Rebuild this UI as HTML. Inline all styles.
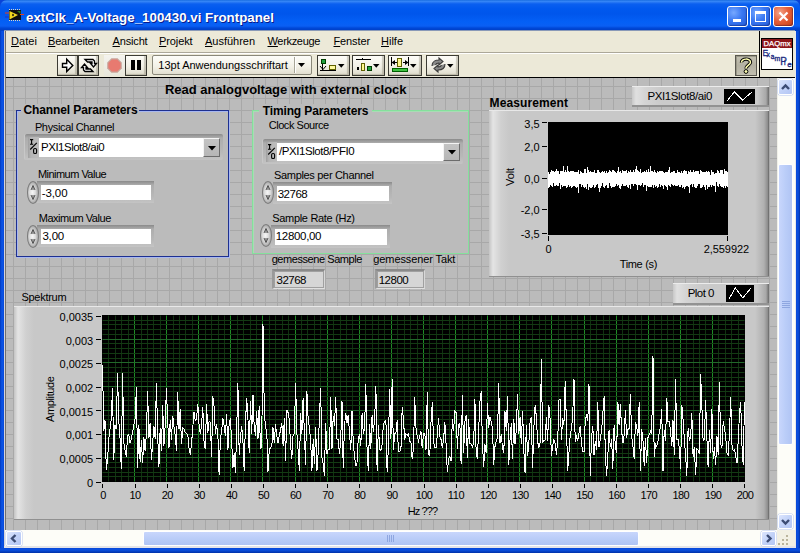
<!DOCTYPE html><html><head><meta charset="utf-8"><style>
*{margin:0;padding:0;box-sizing:border-box}
html,body{width:800px;height:553px;overflow:hidden;background:#fff;font-family:"Liberation Sans",sans-serif}
.a{position:absolute}
.t{position:absolute;white-space:pre;font-family:"Liberation Sans",sans-serif}
svg{position:absolute;overflow:visible}
</style></head><body>
<div class="a" style="left:0px;top:0px;width:800px;height:553px;background:#0842d8;"></div>
<div class="a" style="left:0px;top:0px;width:800px;height:31px;background:linear-gradient(180deg,#0a5fd8 0px,#3b8cf8 1px,#2c7cf4 2px,#0a5ff0 4px,#0058ee 9px,#0056ec 14px,#0460f6 22px,#0a5ff4 26px,#0048d8 28px,#0040c8 30px);border-radius:7px 7px 0 0;"></div>
<div class="a" style="left:0px;top:31px;width:4px;height:522px;background:linear-gradient(90deg,#0038c0,#0a55e8 2px,#0848d8);"></div>
<div class="a" style="left:4px;top:31px;width:1px;height:517px;background:#d4d4dc;"></div>
<div class="a" style="left:796px;top:31px;width:4px;height:522px;background:linear-gradient(90deg,#0848d8,#0a50e0 2px,#0030a8);"></div>
<div class="a" style="left:795px;top:31px;width:1px;height:517px;background:#e8e8e8;"></div>
<div class="a" style="left:0px;top:548px;width:800px;height:5px;background:linear-gradient(180deg,#0848d8,#0a50e0 2px,#0030a8);"></div>
<div class="a" style="left:4px;top:546px;width:792px;height:2px;background:#e4e4e8;"></div>
<svg style="left:8px;top:8px" width="16" height="16" viewBox="0 0 16 16">
<line x1="1" y1="1.5" x2="13" y2="1.5" stroke="#d8d8c8" stroke-dasharray="1 1"/>
<line x1="1" y1="12.5" x2="13" y2="12.5" stroke="#d8d8c8" stroke-dasharray="1 1"/>
<rect x="1" y="2" width="12" height="10" fill="#101010"/>
<path d="M1.5 3 L10 7 L1.5 11.5 Z" fill="#f2d820"/>
<path d="M9 3 L12.5 3 L12.5 6 Z" fill="#2a7a20"/>
<path d="M5 5.5 L6 7 L5 8.5 L4 7 Z" fill="#000"/>
<line x1="-3" y1="5" x2="1" y2="5" stroke="#e04020"/><line x1="12" y1="6.5" x2="16" y2="6.5" stroke="#e04020"/>
<line x1="-3" y1="9" x2="1" y2="9" stroke="#2030c0"/>
</svg>
<div class="a" style="left:727px;top:6px;width:21px;height:21px;border:1px solid #fff;border-radius:3px;background:radial-gradient(circle at 30% 30%,#76a8ff,#3a78f2 45%,#2a64e0 80%,#1c50c8);box-shadow:inset -1px -1px 1px rgba(0,0,60,.35);"></div>
<div class="a" style="left:750px;top:6px;width:21px;height:21px;border:1px solid #fff;border-radius:3px;background:radial-gradient(circle at 30% 30%,#76a8ff,#3a78f2 45%,#2a64e0 80%,#1c50c8);box-shadow:inset -1px -1px 1px rgba(0,0,60,.35);"></div>
<div class="a" style="left:773px;top:6px;width:21px;height:21px;border:1px solid #fff;border-radius:3px;background:radial-gradient(circle at 30% 30%,#f4a68a,#e5603c 45%,#d14a20 80%,#c03a18);box-shadow:inset -1px -1px 1px rgba(0,0,60,.35);"></div>
<div class="a" style="left:733px;top:19px;width:8px;height:3px;background:#fff;"></div>
<div class="a" style="left:755px;top:11px;width:11px;height:11px;border:1px solid #fff;border-top-width:3px;"></div>
<svg style="left:778px;top:11px" width="11" height="11"><path d="M1.5 1.5 L9.5 9.5 M9.5 1.5 L1.5 9.5" stroke="#fff" stroke-width="2.2"/></svg>
<div class="a" style="left:4px;top:30px;width:791px;height:1px;background:#8a9ab8;"></div>
<div class="a" style="left:4px;top:31px;width:791px;height:21px;background:#ece9d8;"></div>
<div class="a" style="left:4px;top:52px;width:756px;height:1px;background:#aca899;"></div>
<div class="a" style="left:4px;top:53px;width:756px;height:1px;background:#fff;"></div>
<div class="a" style="left:4px;top:54px;width:756px;height:23px;background:#ece9d8;"></div>
<div class="a" style="left:4px;top:77px;width:791px;height:1px;background:#000;"></div>
<div class="a" style="left:4px;top:31px;width:1px;height:47px;background:#c8c8d0;"></div>
<div class="a" style="left:5px;top:31px;width:1px;height:47px;background:#6e6e6e;"></div>
<div class="a" style="left:759px;top:31px;width:1px;height:46px;background:#000;"></div>
<div class="a" style="left:760px;top:31px;width:35px;height:46px;background:#ece9d8;"></div>
<div class="a" style="left:761px;top:38px;width:32px;height:32px;background:#fff;border:1px solid #000;"></div>
<div class="a" style="left:762px;top:39px;width:30px;height:9px;background:#8c1418;"></div>
<svg style="left:761px;top:38px" width="32" height="32"><text x="2.5" y="7.6" font-family="Liberation Sans" font-size="7.4" fill="#fff" stroke="#fff" stroke-width="0.25" textLength="27" lengthAdjust="spacingAndGlyphs">DAQmx</text>
<g fill="#1c2a80" stroke="#1c2a80" stroke-width="0.3" font-family="Liberation Sans">
<text x="1.5" y="17.6" font-size="8.5">E</text><text x="5.4" y="19.2" font-size="6.8">x</text><text x="9.8" y="20.8" font-size="6.5">a</text><text x="13.5" y="22.9" font-size="6.5" textLength="5.7" lengthAdjust="spacingAndGlyphs">m</text><text x="19.3" y="27.4" font-size="10">P</text><text x="23" y="26.5" font-size="7">l</text><text x="26.3" y="29" font-size="8">e</text></g></svg>
<div class="a" style="left:57px;top:55px;width:21px;height:21px;border:1px solid #3c3b34;background:linear-gradient(180deg,#fdfcf8,#f2f0e6 55%,#dedbcc);box-shadow:inset -2px -1px 1px rgba(120,115,95,.35);"></div>
<div class="a" style="left:78px;top:55px;width:21px;height:21px;border:1px solid #3c3b34;background:linear-gradient(180deg,#fdfcf8,#f2f0e6 55%,#dedbcc);box-shadow:inset -2px -1px 1px rgba(120,115,95,.35);"></div>
<div class="a" style="left:104px;top:55px;width:21px;height:21px;background:linear-gradient(180deg,#f4f3ee,#e8e6da);"></div>
<div class="a" style="left:125px;top:55px;width:22px;height:21px;border:1px solid #3c3b34;background:linear-gradient(180deg,#fdfcf8,#f2f0e6 55%,#dedbcc);box-shadow:inset -2px -1px 1px rgba(120,115,95,.35);"></div>
<svg style="left:57px;top:55px" width="21" height="21"><path d="M5.5 8.5 H9.7 V4.3 L15.8 10.4 L9.7 16.5 V12.3 H5.5 Z" fill="#fff" stroke="#000" stroke-width="1.4"/></svg>
<svg style="left:78px;top:55px" width="21" height="21"><path d="M7 4.5 L15 4.5 L16.5 6 L16.5 8.5 L18.5 8.5 L15.5 12 L12.5 8.5 L14 8.5 L14 7 L9.5 7 Z" fill="#fff" stroke="#000" stroke-width="1.3" stroke-linejoin="miter"/><path d="M15 16.5 L7 16.5 L5.5 15 L5.5 12.5 L3.5 12.5 L6.5 9 L9.5 12.5 L8 12.5 L8 14 L12.5 14 Z" fill="#fff" stroke="#000" stroke-width="1.3"/></svg>
<svg style="left:104px;top:55px" width="21" height="21"><path d="M7.4 3.2 H13.6 L17.8 7.4 V13.6 L13.6 17.8 H7.4 L3.2 13.6 V7.4 Z" fill="#c9a49a"/><path d="M7.9 4.4 H13.1 L16.6 7.9 V13.1 L13.1 16.6 H7.9 L4.4 13.1 V7.9 Z" fill="#e87a70"/></svg>
<div class="a" style="left:131px;top:60px;width:4px;height:10px;background:#000;"></div>
<div class="a" style="left:137px;top:60px;width:4px;height:10px;background:#000;"></div>
<div class="a" style="left:152px;top:55px;width:160px;height:20px;border:1px solid #8a887a;border-radius:2px;background:linear-gradient(180deg,#fdfdf9,#f2f0e6 60%,#e2dfd0);"></div>
<div class="a" style="left:294px;top:57px;width:1px;height:16px;background:#a8a698;"></div>
<div class="a" style="left:295px;top:57px;width:1px;height:16px;background:#fff;"></div>
<svg style="left:298px;top:63px" width="8" height="5"><path d="M0 0 H7 L3.5 4 Z" fill="#000"/></svg>
<div class="a" style="left:317px;top:55px;width:33px;height:21px;border:1px solid #3c3b34;background:linear-gradient(180deg,#fdfcf8,#f2f0e6 55%,#dedbcc);box-shadow:inset -2px -1px 1px rgba(120,115,95,.35);"></div>
<svg style="left:338px;top:64px" width="8" height="5"><path d="M0 0 H6.5 L3.25 3.8 Z" fill="#000"/></svg>
<div class="a" style="left:352px;top:55px;width:33px;height:21px;border:1px solid #3c3b34;background:linear-gradient(180deg,#fdfcf8,#f2f0e6 55%,#dedbcc);box-shadow:inset -2px -1px 1px rgba(120,115,95,.35);"></div>
<svg style="left:373px;top:64px" width="8" height="5"><path d="M0 0 H6.5 L3.25 3.8 Z" fill="#000"/></svg>
<div class="a" style="left:388px;top:55px;width:34px;height:21px;border:1px solid #3c3b34;background:linear-gradient(180deg,#fdfcf8,#f2f0e6 55%,#dedbcc);box-shadow:inset -2px -1px 1px rgba(120,115,95,.35);"></div>
<svg style="left:410px;top:64px" width="8" height="5"><path d="M0 0 H6.5 L3.25 3.8 Z" fill="#000"/></svg>
<div class="a" style="left:426px;top:55px;width:33px;height:21px;border:1px solid #3c3b34;background:linear-gradient(180deg,#fdfcf8,#f2f0e6 55%,#dedbcc);box-shadow:inset -2px -1px 1px rgba(120,115,95,.35);"></div>
<svg style="left:447px;top:64px" width="8" height="5"><path d="M0 0 H6.5 L3.25 3.8 Z" fill="#000"/></svg>
<div class="a" style="left:321px;top:59px;width:5px;height:5px;background:#20a040;border:1px solid #004000;"></div>
<div class="a" style="left:322px;top:64px;width:1px;height:6px;background:#000;"></div>
<svg style="left:319px;top:65px" width="10" height="6"><path d="M1 1 L4 4.5 L7 1" fill="none" stroke="#000"/></svg>
<div class="a" style="left:320px;top:70px;width:16px;height:1px;background:#000;"></div>
<div class="a" style="left:329px;top:65px;width:7px;height:5px;background:#fffaa0;border:1px solid #606000;"></div>
<div class="a" style="left:356px;top:59px;width:15px;height:1px;background:#000;"></div>
<div class="a" style="left:362px;top:58px;width:1px;height:2px;background:#000;"></div>
<div class="a" style="left:357px;top:67px;width:2px;height:3px;background:#000;"></div>
<div class="a" style="left:361px;top:63px;width:4px;height:8px;background:#fff890;border:1px solid #606000;"></div>
<div class="a" style="left:367px;top:66px;width:5px;height:5px;background:#20a040;border:1px solid #004000;"></div>
<div class="a" style="left:397px;top:58px;width:5px;height:9px;background:#fff890;border:1px solid #606000;"></div>
<svg style="left:391px;top:59px" width="18" height="8"><path d="M0.5 3.5 L4 1 V6Z M17.5 3.5 L14 1 V6Z" fill="#000"/><path d="M3 3.5 H6 M12 3.5 H15" stroke="#000"/></svg>
<div class="a" style="left:391px;top:57px;width:1px;height:9px;background:#000;"></div>
<div class="a" style="left:408px;top:57px;width:1px;height:9px;background:#000;"></div>
<div class="a" style="left:392px;top:68px;width:16px;height:4px;background:#40c040;border:1px solid #006000;"></div>
<svg style="left:429px;top:57px" width="20" height="16"><path d="M3 9 C3 4 7 3 10 3 L10 1 L14 4.5 L10 8 L10 6 C8 6 7 6.5 6.5 8" fill="#8a8a8a" stroke="#3a3a3a" stroke-width="1.1"/><path d="M16 7 C16 12 12 13 9 13 L9 15 L5 11.5 L9 8 L9 10 C11 10 12 9.5 12.5 8" fill="#8a8a8a" stroke="#3a3a3a" stroke-width="1.1"/></svg>
<div class="a" style="left:735px;top:55px;width:22px;height:21px;border:1px solid #5a5850;background:linear-gradient(180deg,#c4c1b2,#b4b1a2 50%,#c2bfb0);box-shadow:inset 1px 1px 0 #9a9888;"></div>
<svg style="left:735px;top:55px" width="22" height="21"><path d="M6.5 7.5 C6 3.3 15.5 2.8 15.5 7.2 C15.5 9.8 11 10.5 11 13.5" fill="none" stroke="#000" stroke-width="3.4"/><path d="M6.5 7.5 C6 3.3 15.5 2.8 15.5 7.2 C15.5 9.8 11 10.5 11 13.5" fill="none" stroke="#ffffb0" stroke-width="1.5"/><circle cx="11" cy="16.5" r="1.9" fill="#ffffb0" stroke="#000" stroke-width="1"/></svg>
<div class="a" style="left:4px;top:78px;width:1px;height:452px;background:#d4d4dc;"></div>
<div class="a" style="left:5px;top:78px;width:1px;height:452px;background:#707070;"></div>
<div class="a" style="left:6px;top:78px;width:771px;height:452px;background-color:#bbbbbb;background-image:linear-gradient(90deg,#a8a8a8 1px,transparent 1px),linear-gradient(180deg,#a8a8a8 1px,transparent 1px);background-size:12px 12px;background-position:7px 8px;"></div>
<div class="a" style="left:17px;top:111px;width:213px;height:147px;border:1px solid #a8b8f0;"></div>
<div class="a" style="left:16px;top:110px;width:213px;height:147px;border:1px solid #1e3090;background:#bbbbbb;box-shadow:inset 1px 1px 0 #a8b8f0;"></div>
<div class="a" style="left:21px;top:104px;width:118px;height:10px;background:#bbbbbb;"></div>
<div class="a" style="left:252px;top:110px;width:217px;height:144px;border:1px solid #84e09c;background:#bbbbbb;box-shadow:inset 1px 1px 0 #a8dcb4;"></div>
<div class="a" style="left:259px;top:104px;width:113px;height:10px;background:#bbbbbb;"></div>
<div class="a" style="left:25px;top:134px;width:198px;height:26px;background:linear-gradient(180deg,#8a8a8a 0,#9c9c9c 2px,#adadad 4px,#b8b8b8 70%,#c4c4c4 100%);border-radius:2px;box-shadow:-1px 0 0 #c8c8c8;"></div>
<div class="a" style="left:28px;top:137px;width:11px;height:21px;background:linear-gradient(90deg,#a0a0a0,#b6b6b6 3px,#bcbcbc);"></div>
<div class="a" style="left:39px;top:138px;width:164px;height:19px;background:#fff;"></div>
<svg style="left:30px;top:139px" width="9" height="16"><g fill="none" stroke="#000" stroke-width="1.1">
<path d="M0 0.6 H3.2 M1.6 0.6 V5.2 M0 5.2 H3.2"/><path d="M0.2 10.5 L6.8 3.8"/><rect x="3.6" y="9.5" width="3" height="5" rx="1.3"/></g></svg>
<div class="a" style="left:203px;top:138px;width:17px;height:19px;background:linear-gradient(180deg,#c4c4c4,#b6b6b6);border:1px solid #f4f4f4;border-right-color:#6c6c6c;border-bottom-color:#6c6c6c;"></div>
<svg style="left:208px;top:145.5px" width="8" height="5"><path d="M0 0 H8 L4 4.5 Z" fill="#000"/></svg>
<div class="a" style="left:37px;top:181px;width:117px;height:22px;background:linear-gradient(180deg,#8a8a8a 0,#9c9c9c 2px,#adadad 4px,#b8b8b8 70%,#c4c4c4 100%);"></div>
<div class="a" style="left:41px;top:185px;width:110px;height:15px;background:#fff;"></div>
<div class="a" style="left:27px;top:181px;width:12px;height:23px;background:radial-gradient(ellipse 65% 60% at 45% 50%,#f6f6f6,#dcdcdc 45%,#b0b0b0 80%,#8a8a8a);border:1px solid #7c7c7c;border-radius:6px/11px;"></div>
<svg style="left:27px;top:181px" width="12" height="23"><path d="M4 9 L6 4.5 L8 9 M6 5 V9 M4 14 L6 18.5 L8 14 M6 14 V18" fill="none" stroke="#505050" stroke-width="1"/></svg>
<div class="a" style="left:37px;top:225px;width:117px;height:22px;background:linear-gradient(180deg,#8a8a8a 0,#9c9c9c 2px,#adadad 4px,#b8b8b8 70%,#c4c4c4 100%);"></div>
<div class="a" style="left:41px;top:229px;width:110px;height:15px;background:#fff;"></div>
<div class="a" style="left:27px;top:224.5px;width:12px;height:23px;background:radial-gradient(ellipse 65% 60% at 45% 50%,#f6f6f6,#dcdcdc 45%,#b0b0b0 80%,#8a8a8a);border:1px solid #7c7c7c;border-radius:6px/11px;"></div>
<svg style="left:27px;top:224.5px" width="12" height="23"><path d="M4 9 L6 4.5 L8 9 M6 5 V9 M4 14 L6 18.5 L8 14 M6 14 V18" fill="none" stroke="#505050" stroke-width="1"/></svg>
<div class="a" style="left:262.5px;top:138.7px;width:200.5px;height:25.200000000000017px;background:linear-gradient(180deg,#8a8a8a 0,#9c9c9c 2px,#adadad 4px,#b8b8b8 70%,#c4c4c4 100%);border-radius:2px;box-shadow:-1px 0 0 #c8c8c8;"></div>
<div class="a" style="left:265.5px;top:141.7px;width:11px;height:20.200000000000017px;background:linear-gradient(90deg,#a0a0a0,#b6b6b6 3px,#bcbcbc);"></div>
<div class="a" style="left:276.5px;top:142.7px;width:166.5px;height:18.200000000000017px;background:#fff;"></div>
<svg style="left:267.5px;top:143.7px" width="9" height="16"><g fill="none" stroke="#000" stroke-width="1.1">
<path d="M0 0.6 H3.2 M1.6 0.6 V5.2 M0 5.2 H3.2"/><path d="M0.2 10.5 L6.8 3.8"/><rect x="3.6" y="9.5" width="3" height="5" rx="1.3"/></g></svg>
<div class="a" style="left:443px;top:142.7px;width:17px;height:18.200000000000017px;background:linear-gradient(180deg,#c4c4c4,#b6b6b6);border:1px solid #f4f4f4;border-right-color:#6c6c6c;border-bottom-color:#6c6c6c;"></div>
<svg style="left:448px;top:149.8px" width="8" height="5"><path d="M0 0 H8 L4 4.5 Z" fill="#000"/></svg>
<div class="a" style="left:273px;top:182px;width:119px;height:22px;background:linear-gradient(180deg,#8a8a8a 0,#9c9c9c 2px,#adadad 4px,#b8b8b8 70%,#c4c4c4 100%);"></div>
<div class="a" style="left:277px;top:186px;width:112px;height:15px;background:#fff;"></div>
<div class="a" style="left:262px;top:181px;width:12px;height:23px;background:radial-gradient(ellipse 65% 60% at 45% 50%,#f6f6f6,#dcdcdc 45%,#b0b0b0 80%,#8a8a8a);border:1px solid #7c7c7c;border-radius:6px/11px;"></div>
<svg style="left:262px;top:181px" width="12" height="23"><path d="M4 9 L6 4.5 L8 9 M6 5 V9 M4 14 L6 18.5 L8 14 M6 14 V18" fill="none" stroke="#505050" stroke-width="1"/></svg>
<div class="a" style="left:271px;top:224.5px;width:119px;height:23.5px;background:linear-gradient(180deg,#8a8a8a 0,#9c9c9c 2px,#adadad 4px,#b8b8b8 70%,#c4c4c4 100%);"></div>
<div class="a" style="left:275px;top:228.5px;width:112px;height:16.5px;background:#fff;"></div>
<div class="a" style="left:260px;top:224px;width:12px;height:23px;background:radial-gradient(ellipse 65% 60% at 45% 50%,#f6f6f6,#dcdcdc 45%,#b0b0b0 80%,#8a8a8a);border:1px solid #7c7c7c;border-radius:6px/11px;"></div>
<svg style="left:260px;top:224px" width="12" height="23"><path d="M4 9 L6 4.5 L8 9 M6 5 V9 M4 14 L6 18.5 L8 14 M6 14 V18" fill="none" stroke="#505050" stroke-width="1"/></svg>
<div class="a" style="left:272px;top:269px;width:53px;height:20px;background:#a0a0a0;border-top:2px solid #8a8a8a;border-left:2px solid #9a9a9a;border-bottom:1px solid #e0e0e0;border-right:1px solid #d8d8d8;"></div>
<div class="a" style="left:275px;top:272px;width:48px;height:15px;background:#d6d6d6;"></div>
<div class="a" style="left:375px;top:269px;width:50px;height:20px;background:#a0a0a0;border-top:2px solid #8a8a8a;border-left:2px solid #9a9a9a;border-bottom:1px solid #e0e0e0;border-right:1px solid #d8d8d8;"></div>
<div class="a" style="left:378px;top:272px;width:45px;height:15px;background:#d6d6d6;"></div>
<div class="a" style="left:489px;top:110px;width:280px;height:167px;background:linear-gradient(90deg,#c4c4c4 0,#e4e4e4 4px,#d0d0d0 12px,#c8c8c8 20px,#c8c8c8 calc(100% - 14px),#b0b0b0 calc(100% - 5px),#8a8a8a calc(100% - 1px),#5a5a5a 100%);border-top:1px solid #e8e8e8;border-bottom:1px solid #909090;"></div>
<div class="a" style="left:548px;top:122px;width:180px;height:113px;background:#000;"></div>
<div class="a" style="left:542px;top:122px;width:5px;height:1px;background:#000;"></div>
<div class="a" style="left:542px;top:146px;width:5px;height:1px;background:#000;"></div>
<div class="a" style="left:542px;top:178px;width:5px;height:1px;background:#000;"></div>
<div class="a" style="left:542px;top:209px;width:5px;height:1px;background:#000;"></div>
<div class="a" style="left:542px;top:233px;width:5px;height:1px;background:#000;"></div>
<div class="a" style="left:548px;top:236px;width:1px;height:5px;background:#000;"></div>
<div class="a" style="left:727px;top:236px;width:1px;height:5px;background:#000;"></div>
<div class="a" style="left:632px;top:86px;width:137px;height:21px;background:linear-gradient(90deg,#c8c8c8,#e0e0e0 4px,#d4d4d4 13px,#cacaca 30px,#cacaca calc(100% - 12px),#a8a8a8 calc(100% - 3px),#6a6a6a);border-top:1px solid #ececec;border-bottom:2px solid #929292;"></div>
<div class="a" style="left:724px;top:89px;width:31px;height:15px;background:#000;"></div>
<svg style="left:724px;top:89px" width="31" height="15"><path d="M3 12 L10.3 3 L18.6 11 L28 3" fill="none" stroke="#fff" stroke-width="1" shape-rendering="crispEdges"/></svg>
<div class="a" style="left:673px;top:283px;width:96px;height:22px;background:linear-gradient(90deg,#c8c8c8,#e0e0e0 4px,#d4d4d4 13px,#cacaca 30px,#cacaca calc(100% - 12px),#a8a8a8 calc(100% - 3px),#6a6a6a);border-top:1px solid #ececec;border-bottom:2px solid #929292;"></div>
<div class="a" style="left:726px;top:285px;width:28px;height:17px;background:#000;"></div>
<svg style="left:726px;top:285px" width="28" height="17"><path d="M3 14 L9.3 3 L16.8 13 L25 3" fill="none" stroke="#fff" stroke-width="1" shape-rendering="crispEdges"/></svg>
<svg style="left:0;top:0" width="800" height="553"><polygon points="548,172 549,172 549,174 550,174 550,172 551,172 551,170 552,170 552,171 553,171 553,171 554,171 554,172 555,172 555,171 556,171 556,169 557,169 557,171 558,171 558,171 559,171 559,174 560,174 560,171 561,171 561,171 562,171 562,171 563,171 563,166 564,166 564,172 565,172 565,170 566,170 566,172 567,172 567,166 568,166 568,171 569,171 569,172 570,172 570,171 571,171 571,171 572,171 572,171 573,171 573,171 574,171 574,172 575,172 575,172 576,172 576,172 577,172 577,172 578,172 578,170 579,170 579,174 580,174 580,171 581,171 581,172 582,172 582,173 583,173 583,173 584,173 584,169 585,169 585,169 586,169 586,173 587,173 587,167 588,167 588,170 589,170 589,172 590,172 590,171 591,171 591,172 592,172 592,172 593,172 593,172 594,172 594,170 595,170 595,173 596,173 596,173 597,173 597,170 598,170 598,170 599,170 599,172 600,172 600,173 601,173 601,172 602,172 602,171 603,171 603,172 604,172 604,171 605,171 605,173 606,173 606,171 607,171 607,173 608,173 608,172 609,172 609,170 610,170 610,171 611,171 611,172 612,172 612,170 613,170 613,170 614,170 614,171 615,171 615,172 616,172 616,173 617,173 617,171 618,171 618,167 619,167 619,172 620,172 620,171 621,171 621,173 622,173 622,170 623,170 623,171 624,171 624,171 625,171 625,171 626,171 626,170 627,170 627,173 628,173 628,171 629,171 629,172 630,172 630,170 631,170 631,172 632,172 632,172 633,172 633,170 634,170 634,172 635,172 635,169 636,169 636,166 637,166 637,170 638,170 638,171 639,171 639,172 640,172 640,169 641,169 641,173 642,173 642,172 643,172 643,172 644,172 644,171 645,171 645,172 646,172 646,170 647,170 647,172 648,172 648,169 649,169 649,172 650,172 650,166 651,166 651,171 652,171 652,171 653,171 653,172 654,172 654,170 655,170 655,172 656,172 656,173 657,173 657,171 658,171 658,172 659,172 659,171 660,171 660,171 661,171 661,171 662,171 662,171 663,171 663,172 664,172 664,173 665,173 665,172 666,172 666,172 667,172 667,172 668,172 668,170 669,170 669,167 670,167 670,173 671,173 671,172 672,172 672,172 673,172 673,171 674,171 674,171 675,171 675,173 676,173 676,173 677,173 677,170 678,170 678,172 679,172 679,172 680,172 680,173 681,173 681,171 682,171 682,173 683,173 683,171 684,171 684,170 685,170 685,171 686,171 686,171 687,171 687,174 688,174 688,171 689,171 689,172 690,172 690,170 691,170 691,172 692,172 692,172 693,172 693,170 694,170 694,172 695,172 695,171 696,171 696,171 697,171 697,171 698,171 698,171 699,171 699,174 700,174 700,170 701,170 701,171 702,171 702,172 703,172 703,172 704,172 704,172 705,172 705,172 706,172 706,171 707,171 707,172 708,172 708,171 709,171 709,172 710,172 710,175 711,175 711,170 712,170 712,172 713,172 713,172 714,172 714,174 715,174 715,173 716,173 716,173 717,173 717,170 718,170 718,171 719,171 719,173 720,173 720,170 721,170 721,170 722,170 722,170 723,170 723,174 724,174 724,169 725,169 725,171 726,171 726,171 727,171 727,172 728,172 728,187 727,187 727,186 726,186 726,188 725,188 725,186 724,186 724,188 723,188 723,187 722,187 722,187 721,187 721,186 720,186 720,184 719,184 719,187 718,187 718,186 717,186 717,182 716,182 716,192 715,192 715,186 714,186 714,186 713,186 713,185 712,185 712,187 711,187 711,185 710,185 710,187 709,187 709,187 708,187 708,189 707,189 707,185 706,185 706,190 705,190 705,187 704,187 704,185 703,185 703,187 702,187 702,188 701,188 701,188 700,188 700,184 699,184 699,184 698,184 698,186 697,186 697,188 696,188 696,188 695,188 695,187 694,187 694,184 693,184 693,187 692,187 692,184 691,184 691,185 690,185 690,193 689,193 689,187 688,187 688,186 687,186 687,186 686,186 686,187 685,187 685,189 684,189 684,187 683,187 683,188 682,188 682,185 681,185 681,187 680,187 680,187 679,187 679,185 678,185 678,186 677,186 677,186 676,186 676,186 675,186 675,185 674,185 674,186 673,186 673,185 672,185 672,184 671,184 671,187 670,187 670,186 669,186 669,185 668,185 668,190 667,190 667,187 666,187 666,186 665,186 665,185 664,185 664,189 663,189 663,186 662,186 662,185 661,185 661,187 660,187 660,184 659,184 659,187 658,187 658,188 657,188 657,186 656,186 656,187 655,187 655,185 654,185 654,188 653,188 653,185 652,185 652,187 651,187 651,187 650,187 650,187 649,187 649,187 648,187 648,186 647,186 647,191 646,191 646,185 645,185 645,185 644,185 644,187 643,187 643,183 642,183 642,185 641,185 641,186 640,186 640,185 639,185 639,185 638,185 638,190 637,190 637,185 636,185 636,184 635,184 635,184 634,184 634,186 633,186 633,184 632,184 632,184 631,184 631,189 630,189 630,185 629,185 629,188 628,188 628,187 627,187 627,185 626,185 626,186 625,186 625,186 624,186 624,186 623,186 623,184 622,184 622,186 621,186 621,189 620,189 620,188 619,188 619,185 618,185 618,186 617,186 617,184 616,184 616,186 615,186 615,187 614,187 614,187 613,187 613,187 612,187 612,188 611,188 611,186 610,186 610,183 609,183 609,188 608,188 608,188 607,188 607,185 606,185 606,186 605,186 605,188 604,188 604,187 603,187 603,183 602,183 602,186 601,186 601,188 600,188 600,192 599,192 599,188 598,188 598,184 597,184 597,185 596,185 596,187 595,187 595,188 594,188 594,185 593,185 593,187 592,187 592,188 591,188 591,188 590,188 590,187 589,187 589,190 588,190 588,184 587,184 587,189 586,189 586,187 585,187 585,188 584,188 584,187 583,187 583,185 582,185 582,187 581,187 581,184 580,184 580,184 579,184 579,193 578,193 578,187 577,187 577,188 576,188 576,187 575,187 575,186 574,186 574,186 573,186 573,187 572,187 572,188 571,188 571,186 570,186 570,187 569,187 569,185 568,185 568,187 567,187 567,188 566,188 566,186 565,186 565,186 564,186 564,186 563,186 563,187 562,187 562,185 561,185 561,189 560,189 560,183 559,183 559,186 558,186 558,186 557,186 557,185 556,185 556,186 555,186 555,186 554,186 554,183 553,183 553,187 552,187 552,186 551,186 551,185 550,185 550,187 549,187 549,188 548,188" fill="#fff" shape-rendering="crispEdges"/></svg>
<div class="a" style="left:14px;top:306px;width:755px;height:214px;background:linear-gradient(90deg,#c4c4c4 0,#e4e4e4 4px,#d0d0d0 12px,#c8c8c8 20px,#c8c8c8 calc(100% - 14px),#b0b0b0 calc(100% - 5px),#8a8a8a calc(100% - 1px),#5a5a5a 100%);border-top:1px solid #e8e8e8;border-bottom:1px solid #909090;"></div>
<div class="a" style="left:102px;top:315px;width:643px;height:167px;background:#000;"></div>
<svg style="left:0;top:0" width="800" height="553"><line x1="108.5" y1="315.5" x2="108.5" y2="481.5" stroke="#113211" stroke-width="1"/><line x1="115.5" y1="315.5" x2="115.5" y2="481.5" stroke="#113211" stroke-width="1"/><line x1="121.5" y1="315.5" x2="121.5" y2="481.5" stroke="#113211" stroke-width="1"/><line x1="128.5" y1="315.5" x2="128.5" y2="481.5" stroke="#113211" stroke-width="1"/><line x1="134.5" y1="315.5" x2="134.5" y2="481.5" stroke="#1f8a26" stroke-width="1"/><line x1="141.5" y1="315.5" x2="141.5" y2="481.5" stroke="#113211" stroke-width="1"/><line x1="147.5" y1="315.5" x2="147.5" y2="481.5" stroke="#113211" stroke-width="1"/><line x1="153.5" y1="315.5" x2="153.5" y2="481.5" stroke="#113211" stroke-width="1"/><line x1="160.5" y1="315.5" x2="160.5" y2="481.5" stroke="#113211" stroke-width="1"/><line x1="166.5" y1="315.5" x2="166.5" y2="481.5" stroke="#1f8a26" stroke-width="1"/><line x1="173.5" y1="315.5" x2="173.5" y2="481.5" stroke="#113211" stroke-width="1"/><line x1="179.5" y1="315.5" x2="179.5" y2="481.5" stroke="#113211" stroke-width="1"/><line x1="185.5" y1="315.5" x2="185.5" y2="481.5" stroke="#113211" stroke-width="1"/><line x1="192.5" y1="315.5" x2="192.5" y2="481.5" stroke="#113211" stroke-width="1"/><line x1="198.5" y1="315.5" x2="198.5" y2="481.5" stroke="#1f8a26" stroke-width="1"/><line x1="205.5" y1="315.5" x2="205.5" y2="481.5" stroke="#113211" stroke-width="1"/><line x1="211.5" y1="315.5" x2="211.5" y2="481.5" stroke="#113211" stroke-width="1"/><line x1="218.5" y1="315.5" x2="218.5" y2="481.5" stroke="#113211" stroke-width="1"/><line x1="224.5" y1="315.5" x2="224.5" y2="481.5" stroke="#113211" stroke-width="1"/><line x1="230.5" y1="315.5" x2="230.5" y2="481.5" stroke="#1f8a26" stroke-width="1"/><line x1="237.5" y1="315.5" x2="237.5" y2="481.5" stroke="#113211" stroke-width="1"/><line x1="243.5" y1="315.5" x2="243.5" y2="481.5" stroke="#113211" stroke-width="1"/><line x1="250.5" y1="315.5" x2="250.5" y2="481.5" stroke="#113211" stroke-width="1"/><line x1="256.5" y1="315.5" x2="256.5" y2="481.5" stroke="#113211" stroke-width="1"/><line x1="262.5" y1="315.5" x2="262.5" y2="481.5" stroke="#1f8a26" stroke-width="1"/><line x1="269.5" y1="315.5" x2="269.5" y2="481.5" stroke="#113211" stroke-width="1"/><line x1="275.5" y1="315.5" x2="275.5" y2="481.5" stroke="#113211" stroke-width="1"/><line x1="282.5" y1="315.5" x2="282.5" y2="481.5" stroke="#113211" stroke-width="1"/><line x1="288.5" y1="315.5" x2="288.5" y2="481.5" stroke="#113211" stroke-width="1"/><line x1="295.5" y1="315.5" x2="295.5" y2="481.5" stroke="#1f8a26" stroke-width="1"/><line x1="301.5" y1="315.5" x2="301.5" y2="481.5" stroke="#113211" stroke-width="1"/><line x1="307.5" y1="315.5" x2="307.5" y2="481.5" stroke="#113211" stroke-width="1"/><line x1="314.5" y1="315.5" x2="314.5" y2="481.5" stroke="#113211" stroke-width="1"/><line x1="320.5" y1="315.5" x2="320.5" y2="481.5" stroke="#113211" stroke-width="1"/><line x1="327.5" y1="315.5" x2="327.5" y2="481.5" stroke="#1f8a26" stroke-width="1"/><line x1="333.5" y1="315.5" x2="333.5" y2="481.5" stroke="#113211" stroke-width="1"/><line x1="340.5" y1="315.5" x2="340.5" y2="481.5" stroke="#113211" stroke-width="1"/><line x1="346.5" y1="315.5" x2="346.5" y2="481.5" stroke="#113211" stroke-width="1"/><line x1="352.5" y1="315.5" x2="352.5" y2="481.5" stroke="#113211" stroke-width="1"/><line x1="359.5" y1="315.5" x2="359.5" y2="481.5" stroke="#1f8a26" stroke-width="1"/><line x1="365.5" y1="315.5" x2="365.5" y2="481.5" stroke="#113211" stroke-width="1"/><line x1="372.5" y1="315.5" x2="372.5" y2="481.5" stroke="#113211" stroke-width="1"/><line x1="378.5" y1="315.5" x2="378.5" y2="481.5" stroke="#113211" stroke-width="1"/><line x1="384.5" y1="315.5" x2="384.5" y2="481.5" stroke="#113211" stroke-width="1"/><line x1="391.5" y1="315.5" x2="391.5" y2="481.5" stroke="#1f8a26" stroke-width="1"/><line x1="397.5" y1="315.5" x2="397.5" y2="481.5" stroke="#113211" stroke-width="1"/><line x1="404.5" y1="315.5" x2="404.5" y2="481.5" stroke="#113211" stroke-width="1"/><line x1="410.5" y1="315.5" x2="410.5" y2="481.5" stroke="#113211" stroke-width="1"/><line x1="417.5" y1="315.5" x2="417.5" y2="481.5" stroke="#113211" stroke-width="1"/><line x1="423.5" y1="315.5" x2="423.5" y2="481.5" stroke="#1f8a26" stroke-width="1"/><line x1="429.5" y1="315.5" x2="429.5" y2="481.5" stroke="#113211" stroke-width="1"/><line x1="436.5" y1="315.5" x2="436.5" y2="481.5" stroke="#113211" stroke-width="1"/><line x1="442.5" y1="315.5" x2="442.5" y2="481.5" stroke="#113211" stroke-width="1"/><line x1="449.5" y1="315.5" x2="449.5" y2="481.5" stroke="#113211" stroke-width="1"/><line x1="455.5" y1="315.5" x2="455.5" y2="481.5" stroke="#1f8a26" stroke-width="1"/><line x1="462.5" y1="315.5" x2="462.5" y2="481.5" stroke="#113211" stroke-width="1"/><line x1="468.5" y1="315.5" x2="468.5" y2="481.5" stroke="#113211" stroke-width="1"/><line x1="474.5" y1="315.5" x2="474.5" y2="481.5" stroke="#113211" stroke-width="1"/><line x1="481.5" y1="315.5" x2="481.5" y2="481.5" stroke="#113211" stroke-width="1"/><line x1="487.5" y1="315.5" x2="487.5" y2="481.5" stroke="#1f8a26" stroke-width="1"/><line x1="494.5" y1="315.5" x2="494.5" y2="481.5" stroke="#113211" stroke-width="1"/><line x1="500.5" y1="315.5" x2="500.5" y2="481.5" stroke="#113211" stroke-width="1"/><line x1="506.5" y1="315.5" x2="506.5" y2="481.5" stroke="#113211" stroke-width="1"/><line x1="513.5" y1="315.5" x2="513.5" y2="481.5" stroke="#113211" stroke-width="1"/><line x1="519.5" y1="315.5" x2="519.5" y2="481.5" stroke="#1f8a26" stroke-width="1"/><line x1="526.5" y1="315.5" x2="526.5" y2="481.5" stroke="#113211" stroke-width="1"/><line x1="532.5" y1="315.5" x2="532.5" y2="481.5" stroke="#113211" stroke-width="1"/><line x1="539.5" y1="315.5" x2="539.5" y2="481.5" stroke="#113211" stroke-width="1"/><line x1="545.5" y1="315.5" x2="545.5" y2="481.5" stroke="#113211" stroke-width="1"/><line x1="551.5" y1="315.5" x2="551.5" y2="481.5" stroke="#1f8a26" stroke-width="1"/><line x1="558.5" y1="315.5" x2="558.5" y2="481.5" stroke="#113211" stroke-width="1"/><line x1="564.5" y1="315.5" x2="564.5" y2="481.5" stroke="#113211" stroke-width="1"/><line x1="571.5" y1="315.5" x2="571.5" y2="481.5" stroke="#113211" stroke-width="1"/><line x1="577.5" y1="315.5" x2="577.5" y2="481.5" stroke="#113211" stroke-width="1"/><line x1="584.5" y1="315.5" x2="584.5" y2="481.5" stroke="#1f8a26" stroke-width="1"/><line x1="590.5" y1="315.5" x2="590.5" y2="481.5" stroke="#113211" stroke-width="1"/><line x1="596.5" y1="315.5" x2="596.5" y2="481.5" stroke="#113211" stroke-width="1"/><line x1="603.5" y1="315.5" x2="603.5" y2="481.5" stroke="#113211" stroke-width="1"/><line x1="609.5" y1="315.5" x2="609.5" y2="481.5" stroke="#113211" stroke-width="1"/><line x1="616.5" y1="315.5" x2="616.5" y2="481.5" stroke="#1f8a26" stroke-width="1"/><line x1="622.5" y1="315.5" x2="622.5" y2="481.5" stroke="#113211" stroke-width="1"/><line x1="628.5" y1="315.5" x2="628.5" y2="481.5" stroke="#113211" stroke-width="1"/><line x1="635.5" y1="315.5" x2="635.5" y2="481.5" stroke="#113211" stroke-width="1"/><line x1="641.5" y1="315.5" x2="641.5" y2="481.5" stroke="#113211" stroke-width="1"/><line x1="648.5" y1="315.5" x2="648.5" y2="481.5" stroke="#1f8a26" stroke-width="1"/><line x1="654.5" y1="315.5" x2="654.5" y2="481.5" stroke="#113211" stroke-width="1"/><line x1="661.5" y1="315.5" x2="661.5" y2="481.5" stroke="#113211" stroke-width="1"/><line x1="667.5" y1="315.5" x2="667.5" y2="481.5" stroke="#113211" stroke-width="1"/><line x1="673.5" y1="315.5" x2="673.5" y2="481.5" stroke="#113211" stroke-width="1"/><line x1="680.5" y1="315.5" x2="680.5" y2="481.5" stroke="#1f8a26" stroke-width="1"/><line x1="686.5" y1="315.5" x2="686.5" y2="481.5" stroke="#113211" stroke-width="1"/><line x1="693.5" y1="315.5" x2="693.5" y2="481.5" stroke="#113211" stroke-width="1"/><line x1="699.5" y1="315.5" x2="699.5" y2="481.5" stroke="#113211" stroke-width="1"/><line x1="705.5" y1="315.5" x2="705.5" y2="481.5" stroke="#113211" stroke-width="1"/><line x1="712.5" y1="315.5" x2="712.5" y2="481.5" stroke="#1f8a26" stroke-width="1"/><line x1="718.5" y1="315.5" x2="718.5" y2="481.5" stroke="#113211" stroke-width="1"/><line x1="725.5" y1="315.5" x2="725.5" y2="481.5" stroke="#113211" stroke-width="1"/><line x1="731.5" y1="315.5" x2="731.5" y2="481.5" stroke="#113211" stroke-width="1"/><line x1="738.5" y1="315.5" x2="738.5" y2="481.5" stroke="#113211" stroke-width="1"/><line x1="102.5" y1="320.5" x2="744.5" y2="320.5" stroke="#133a13" stroke-width="1"/><line x1="102.5" y1="324.5" x2="744.5" y2="324.5" stroke="#133a13" stroke-width="1"/><line x1="102.5" y1="329.5" x2="744.5" y2="329.5" stroke="#133a13" stroke-width="1"/><line x1="102.5" y1="334.5" x2="744.5" y2="334.5" stroke="#133a13" stroke-width="1"/><line x1="102.5" y1="339.5" x2="744.5" y2="339.5" stroke="#22682a" stroke-width="1"/><line x1="102.5" y1="343.5" x2="744.5" y2="343.5" stroke="#133a13" stroke-width="1"/><line x1="102.5" y1="348.5" x2="744.5" y2="348.5" stroke="#133a13" stroke-width="1"/><line x1="102.5" y1="353.5" x2="744.5" y2="353.5" stroke="#133a13" stroke-width="1"/><line x1="102.5" y1="358.5" x2="744.5" y2="358.5" stroke="#133a13" stroke-width="1"/><line x1="102.5" y1="362.5" x2="744.5" y2="362.5" stroke="#22682a" stroke-width="1"/><line x1="102.5" y1="367.5" x2="744.5" y2="367.5" stroke="#133a13" stroke-width="1"/><line x1="102.5" y1="372.5" x2="744.5" y2="372.5" stroke="#133a13" stroke-width="1"/><line x1="102.5" y1="377.5" x2="744.5" y2="377.5" stroke="#133a13" stroke-width="1"/><line x1="102.5" y1="381.5" x2="744.5" y2="381.5" stroke="#133a13" stroke-width="1"/><line x1="102.5" y1="386.5" x2="744.5" y2="386.5" stroke="#22682a" stroke-width="1"/><line x1="102.5" y1="391.5" x2="744.5" y2="391.5" stroke="#133a13" stroke-width="1"/><line x1="102.5" y1="396.5" x2="744.5" y2="396.5" stroke="#133a13" stroke-width="1"/><line x1="102.5" y1="400.5" x2="744.5" y2="400.5" stroke="#133a13" stroke-width="1"/><line x1="102.5" y1="405.5" x2="744.5" y2="405.5" stroke="#133a13" stroke-width="1"/><line x1="102.5" y1="410.5" x2="744.5" y2="410.5" stroke="#22682a" stroke-width="1"/><line x1="102.5" y1="415.5" x2="744.5" y2="415.5" stroke="#133a13" stroke-width="1"/><line x1="102.5" y1="419.5" x2="744.5" y2="419.5" stroke="#133a13" stroke-width="1"/><line x1="102.5" y1="424.5" x2="744.5" y2="424.5" stroke="#133a13" stroke-width="1"/><line x1="102.5" y1="429.5" x2="744.5" y2="429.5" stroke="#133a13" stroke-width="1"/><line x1="102.5" y1="434.5" x2="744.5" y2="434.5" stroke="#22682a" stroke-width="1"/><line x1="102.5" y1="438.5" x2="744.5" y2="438.5" stroke="#133a13" stroke-width="1"/><line x1="102.5" y1="443.5" x2="744.5" y2="443.5" stroke="#133a13" stroke-width="1"/><line x1="102.5" y1="448.5" x2="744.5" y2="448.5" stroke="#133a13" stroke-width="1"/><line x1="102.5" y1="453.5" x2="744.5" y2="453.5" stroke="#133a13" stroke-width="1"/><line x1="102.5" y1="457.5" x2="744.5" y2="457.5" stroke="#22682a" stroke-width="1"/><line x1="102.5" y1="462.5" x2="744.5" y2="462.5" stroke="#133a13" stroke-width="1"/><line x1="102.5" y1="467.5" x2="744.5" y2="467.5" stroke="#133a13" stroke-width="1"/><line x1="102.5" y1="472.5" x2="744.5" y2="472.5" stroke="#133a13" stroke-width="1"/><line x1="102.5" y1="476.5" x2="744.5" y2="476.5" stroke="#133a13" stroke-width="1"/></svg>
<div class="a" style="left:96px;top:316px;width:5px;height:1px;background:#000;"></div>
<div class="a" style="left:96px;top:339px;width:5px;height:1px;background:#000;"></div>
<div class="a" style="left:96px;top:363px;width:5px;height:1px;background:#000;"></div>
<div class="a" style="left:96px;top:387px;width:5px;height:1px;background:#000;"></div>
<div class="a" style="left:96px;top:410px;width:5px;height:1px;background:#000;"></div>
<div class="a" style="left:96px;top:434px;width:5px;height:1px;background:#000;"></div>
<div class="a" style="left:96px;top:458px;width:5px;height:1px;background:#000;"></div>
<div class="a" style="left:96px;top:482px;width:5px;height:1px;background:#000;"></div>
<div class="a" style="left:102px;top:484px;width:1px;height:4px;background:#000;"></div>
<div class="a" style="left:135px;top:484px;width:1px;height:4px;background:#000;"></div>
<div class="a" style="left:167px;top:484px;width:1px;height:4px;background:#000;"></div>
<div class="a" style="left:199px;top:484px;width:1px;height:4px;background:#000;"></div>
<div class="a" style="left:231px;top:484px;width:1px;height:4px;background:#000;"></div>
<div class="a" style="left:263px;top:484px;width:1px;height:4px;background:#000;"></div>
<div class="a" style="left:295px;top:484px;width:1px;height:4px;background:#000;"></div>
<div class="a" style="left:327px;top:484px;width:1px;height:4px;background:#000;"></div>
<div class="a" style="left:359px;top:484px;width:1px;height:4px;background:#000;"></div>
<div class="a" style="left:391px;top:484px;width:1px;height:4px;background:#000;"></div>
<div class="a" style="left:424px;top:484px;width:1px;height:4px;background:#000;"></div>
<div class="a" style="left:456px;top:484px;width:1px;height:4px;background:#000;"></div>
<div class="a" style="left:488px;top:484px;width:1px;height:4px;background:#000;"></div>
<div class="a" style="left:520px;top:484px;width:1px;height:4px;background:#000;"></div>
<div class="a" style="left:552px;top:484px;width:1px;height:4px;background:#000;"></div>
<div class="a" style="left:584px;top:484px;width:1px;height:4px;background:#000;"></div>
<div class="a" style="left:616px;top:484px;width:1px;height:4px;background:#000;"></div>
<div class="a" style="left:648px;top:484px;width:1px;height:4px;background:#000;"></div>
<div class="a" style="left:680px;top:484px;width:1px;height:4px;background:#000;"></div>
<div class="a" style="left:712px;top:484px;width:1px;height:4px;background:#000;"></div>
<div class="a" style="left:744px;top:484px;width:1px;height:4px;background:#000;"></div>
<svg style="left:0;top:0" width="800" height="553"><polyline points="102.5,364.7 103.8,430.9 105.0,420.4 106.3,470.3 107.5,460.1 108.8,438.5 110.0,429.2 111.3,418.6 112.5,387.9 113.8,459.5 115.0,425.3 116.3,429.3 117.5,373.4 118.8,420.6 120.1,439.1 121.3,468.9 122.6,372.8 123.8,442.3 125.1,450.8 126.3,456.8 127.6,435.8 128.8,434.9 130.1,443.3 131.3,438.5 132.6,432.7 133.8,425.6 135.1,418.7 136.4,387.3 137.6,468.0 138.9,425.4 140.1,461.6 141.4,440.3 142.6,462.6 143.9,437.4 145.1,450.7 146.4,433.7 147.6,391.4 148.9,438.2 150.1,423.0 151.4,460.0 152.7,442.3 153.9,426.1 155.2,439.0 156.4,383.5 157.7,435.6 158.9,467.4 160.2,427.8 161.4,451.3 162.7,405.4 163.9,446.0 165.2,425.7 166.4,387.9 167.7,421.1 169.0,447.7 170.2,420.3 171.5,439.5 172.7,415.8 174.0,426.7 175.2,435.0 176.5,450.7 177.7,392.2 179.0,429.4 180.2,409.4 181.5,443.8 182.8,427.9 184.0,428.7 185.3,432.6 186.5,433.8 187.8,434.3 189.0,447.6 190.3,454.7 191.5,444.2 192.8,427.3 194.0,411.6 195.3,420.7 196.5,419.4 197.8,403.8 199.1,425.5 200.3,434.3 201.6,424.2 202.8,407.1 204.1,443.0 205.3,449.2 206.6,403.9 207.8,433.2 209.1,420.8 210.3,422.5 211.6,456.8 212.8,395.8 214.1,407.1 215.4,434.4 216.6,424.5 217.9,435.2 219.1,474.7 220.4,439.3 221.6,431.0 222.9,418.3 224.1,425.3 225.4,436.4 226.6,414.3 227.9,450.4 229.1,423.9 230.4,418.4 231.7,442.4 232.9,468.0 234.2,452.9 235.4,473.2 236.7,428.4 237.9,383.0 239.2,454.5 240.4,437.4 241.7,426.3 242.9,440.1 244.2,471.1 245.4,423.6 246.7,397.9 248.0,420.2 249.2,453.1 250.5,400.9 251.7,433.6 253.0,394.9 254.2,426.8 255.5,435.5 256.7,410.8 258.0,438.8 259.2,405.6 260.5,449.1 261.7,445.5 263.0,324.0 264.3,413.1 265.5,426.2 266.8,432.2 268.0,471.8 269.3,449.6 270.5,447.8 271.8,446.5 273.0,427.4 274.3,443.1 275.5,423.9 276.8,436.0 278.0,443.1 279.3,435.4 280.6,430.1 281.8,422.7 283.1,445.5 284.3,418.3 285.6,460.7 286.8,410.0 288.1,412.6 289.3,419.7 290.6,445.6 291.8,458.5 293.1,434.5 294.3,433.9 295.6,383.5 296.9,433.2 298.1,450.7 299.4,471.1 300.6,413.3 301.9,434.2 303.1,398.0 304.4,434.3 305.6,464.9 306.9,391.4 308.1,418.3 309.4,427.6 310.6,440.4 311.9,471.1 313.2,439.5 314.4,463.9 315.7,427.2 316.9,471.1 318.2,452.9 319.4,416.6 320.7,387.9 321.9,457.6 323.2,463.6 324.4,476.1 325.7,422.8 326.9,454.2 328.2,449.2 329.5,449.2 330.7,397.1 332.0,449.0 333.2,416.0 334.5,425.6 335.7,397.1 337.0,438.9 338.2,439.7 339.5,454.2 340.7,439.5 342.0,400.9 343.2,467.7 344.5,425.5 345.8,412.8 347.0,423.1 348.3,414.6 349.5,433.1 350.8,449.7 352.0,411.0 353.3,443.8 354.5,456.4 355.8,466.3 357.0,462.7 358.3,437.5 359.6,434.8 360.8,445.5 362.1,413.0 363.3,434.3 364.6,427.4 365.8,384.4 367.1,451.4 368.3,471.0 369.6,424.5 370.8,449.1 372.1,415.0 373.3,431.6 374.6,420.2 375.9,386.4 377.1,471.1 378.4,425.1 379.6,448.9 380.9,450.3 382.1,444.8 383.4,424.3 384.6,422.3 385.9,420.1 387.1,471.8 388.4,447.5 389.6,389.3 390.9,439.1 392.2,379.2 393.4,450.4 394.7,433.2 395.9,433.4 397.2,420.2 398.4,451.4 399.7,451.5 400.9,450.4 402.2,407.5 403.4,418.8 404.7,439.5 405.9,433.5 407.2,435.4 408.5,433.9 409.7,441.0 411.0,443.1 412.2,458.8 413.5,448.4 414.7,397.1 416.0,428.2 417.2,436.3 418.5,441.1 419.7,436.3 421.0,431.4 422.2,448.4 423.5,434.0 424.8,433.3 426.0,450.2 427.3,392.2 428.5,454.4 429.8,455.5 431.0,422.2 432.3,402.3 433.5,441.9 434.8,447.8 436.0,448.0 437.3,435.7 438.5,418.1 439.8,436.1 441.1,439.8 442.3,447.8 443.6,439.6 444.8,421.8 446.1,444.1 447.3,471.8 448.6,459.0 449.8,456.3 451.1,461.1 452.3,418.6 453.6,431.3 454.8,411.0 456.1,412.5 457.4,448.6 458.6,424.5 459.9,423.7 461.1,463.8 462.4,395.1 463.6,453.2 464.9,421.9 466.1,415.3 467.4,458.4 468.6,419.5 469.9,443.9 471.1,444.1 472.4,446.8 473.7,442.9 474.9,399.4 476.2,454.5 477.4,458.5 478.7,429.0 479.9,401.7 481.2,391.4 482.4,443.1 483.7,466.8 484.9,444.3 486.2,453.4 487.4,403.5 488.7,427.6 490.0,416.8 491.2,421.4 492.5,428.2 493.7,465.1 495.0,446.5 496.2,441.5 497.5,437.1 498.7,383.5 500.0,443.2 501.2,434.1 502.5,447.4 503.8,452.7 505.0,411.5 506.3,431.2 507.5,396.5 508.8,464.6 510.0,440.2 511.3,423.4 512.5,459.4 513.8,418.6 515.0,444.0 516.3,430.5 517.5,394.2 518.8,433.7 520.1,416.8 521.3,444.3 522.6,410.7 523.8,450.7 525.1,473.2 526.3,425.3 527.6,455.6 528.8,443.7 530.1,421.9 531.3,416.7 532.6,467.7 533.8,428.8 535.1,405.2 536.4,417.0 537.6,441.5 538.9,447.6 540.1,442.5 541.4,358.9 542.6,441.9 543.9,440.6 545.1,439.9 546.4,417.2 547.6,441.3 548.9,405.2 550.1,419.4 551.4,455.7 552.7,445.0 553.9,439.7 555.2,443.3 556.4,454.5 557.7,441.6 558.9,400.1 560.2,399.4 561.4,439.7 562.7,418.2 563.9,424.7 565.2,381.5 566.4,422.7 567.7,471.0 569.0,452.1 570.2,435.2 571.5,428.9 572.7,415.3 574.0,379.2 575.2,441.5 576.5,436.7 577.7,441.0 579.0,433.2 580.2,425.9 581.5,443.2 582.7,451.3 584.0,452.0 585.3,418.7 586.5,415.5 587.8,420.5 589.0,384.0 590.3,476.1 591.5,437.4 592.8,426.1 594.0,455.4 595.3,440.9 596.5,449.9 597.8,401.8 599.0,447.3 600.3,439.2 601.6,430.6 602.8,414.3 604.1,396.5 605.3,453.4 606.6,476.1 607.8,456.3 609.1,429.7 610.3,447.1 611.6,439.2 612.8,468.5 614.1,425.2 615.3,445.9 616.6,452.7 617.9,401.9 619.1,425.2 620.4,403.8 621.6,430.4 622.9,443.3 624.1,435.6 625.4,410.0 626.6,437.9 627.9,429.7 629.1,428.6 630.4,394.2 631.6,435.2 632.9,446.0 634.2,458.7 635.4,422.5 636.7,426.0 637.9,436.1 639.2,401.8 640.4,471.1 641.7,429.1 642.9,439.1 644.2,466.1 645.4,438.4 646.7,463.4 647.9,437.8 649.2,434.9 650.5,431.3 651.7,433.7 653.0,356.0 654.2,456.9 655.5,443.9 656.7,446.1 658.0,441.4 659.2,432.8 660.5,426.8 661.7,409.5 663.0,471.1 664.2,430.5 665.5,440.8 666.8,398.5 668.0,421.5 669.3,421.1 670.5,430.5 671.8,446.3 673.0,420.4 674.3,455.4 675.5,379.2 676.8,439.6 678.0,439.0 679.3,447.4 680.6,468.8 681.8,404.7 683.1,420.3 684.3,438.6 685.6,454.8 686.8,476.1 688.1,427.7 689.3,440.4 690.6,437.6 691.8,413.3 693.1,456.5 694.3,446.9 695.6,474.7 696.9,449.3 698.1,450.0 699.4,453.8 700.6,374.0 701.9,406.7 703.1,440.7 704.4,439.3 705.6,399.9 706.9,438.4 708.1,467.0 709.4,430.5 710.6,453.4 711.9,409.4 713.2,458.7 714.4,447.3 715.7,464.8 716.9,435.7 718.2,454.7 719.4,382.1 720.7,443.8 721.9,447.9 723.2,421.3 724.4,428.4 725.7,436.3 726.9,452.8 728.2,455.7 729.5,432.8 730.7,396.6 732.0,445.2 733.2,450.8 734.5,449.3 735.7,456.1 737.0,463.1 738.2,440.9 739.5,412.9 740.7,402.3 742.0,446.1 743.2,465.0 744.5,402.3" fill="none" stroke="#fff" stroke-width="1" shape-rendering="crispEdges"/></svg>
<div class="a" style="left:777px;top:78px;width:18px;height:452px;background:#fdfdf8;border-left:1px solid #f0f0e8;"></div>
<div class="a" style="left:778px;top:79px;width:15px;height:16px;border:1px solid #fff;border-radius:2px;background:linear-gradient(135deg,#dde6fd,#c2d2f8 50%,#b4c6f4);box-shadow:0 0 0 0.5px #b8c8f0;"></div>
<svg style="left:778px;top:79px" width="15" height="16"><path d="M4 10 L7.5 6.5 L11 10" fill="none" stroke="#3c4c74" stroke-width="2.4"/></svg>
<div class="a" style="left:778px;top:514px;width:15px;height:15px;border:1px solid #fff;border-radius:2px;background:linear-gradient(135deg,#dde6fd,#c2d2f8 50%,#b4c6f4);box-shadow:0 0 0 0.5px #b8c8f0;"></div>
<svg style="left:778px;top:514px" width="15" height="15"><path d="M4 6 L7.5 9.5 L11 6" fill="none" stroke="#3c4c74" stroke-width="2.4"/></svg>
<div class="a" style="left:778px;top:164px;width:15px;height:281px;border:1px solid #fff;border-radius:2px;background:linear-gradient(90deg,#c8d6fc,#bacdf8 50%,#b0c4f4);"></div>
<div class="a" style="left:782px;top:301px;width:8px;height:1px;background:#8ea6e0;"></div>
<div class="a" style="left:782px;top:303px;width:8px;height:1px;background:#8ea6e0;"></div>
<div class="a" style="left:782px;top:305px;width:8px;height:1px;background:#8ea6e0;"></div>
<div class="a" style="left:782px;top:307px;width:8px;height:1px;background:#8ea6e0;"></div>
<div class="a" style="left:5px;top:530px;width:772px;height:16px;background:#fdfdf8;"></div>
<div class="a" style="left:6px;top:531px;width:16px;height:15px;border:1px solid #fff;border-radius:2px;background:linear-gradient(135deg,#dde6fd,#c2d2f8 50%,#b4c6f4);box-shadow:0 0 0 0.5px #b8c8f0;"></div>
<svg style="left:6px;top:531px" width="16" height="15"><path d="M9.5 4 L6 7.5 L9.5 11" fill="none" stroke="#3c4c74" stroke-width="2.4"/></svg>
<div class="a" style="left:761px;top:531px;width:15px;height:15px;border:1px solid #fff;border-radius:2px;background:linear-gradient(135deg,#dde6fd,#c2d2f8 50%,#b4c6f4);box-shadow:0 0 0 0.5px #b8c8f0;"></div>
<svg style="left:761px;top:531px" width="15" height="15"><path d="M6 4 L9.5 7.5 L6 11" fill="none" stroke="#3c4c74" stroke-width="2.4"/></svg>
<div class="a" style="left:143px;top:531px;width:496px;height:15px;border:1px solid #fff;border-radius:2px;background:linear-gradient(180deg,#c8d6fc,#bacdf8 50%,#b0c4f4);"></div>
<div class="a" style="left:387px;top:535px;width:1px;height:7px;background:#8ea6e0;"></div>
<div class="a" style="left:389px;top:535px;width:1px;height:7px;background:#8ea6e0;"></div>
<div class="a" style="left:391px;top:535px;width:1px;height:7px;background:#8ea6e0;"></div>
<div class="a" style="left:393px;top:535px;width:1px;height:7px;background:#8ea6e0;"></div>
<div class="a" style="left:777px;top:530px;width:18px;height:16px;background:#f2f0e4;"></div>
<div class="a" style="left:786px;top:535px;width:2px;height:2px;background:#bab49c;"></div>
<div class="a" style="left:782px;top:539px;width:2px;height:2px;background:#bab49c;"></div>
<div class="a" style="left:786px;top:539px;width:2px;height:2px;background:#bab49c;"></div>
<div class="a" style="left:778px;top:543px;width:2px;height:2px;background:#bab49c;"></div>
<div class="a" style="left:782px;top:543px;width:2px;height:2px;background:#bab49c;"></div>
<div class="a" style="left:786px;top:543px;width:2px;height:2px;background:#bab49c;"></div>
<div class="t" style="left:26.00px;top:11.00px;font-size:13.3px;line-height:13.3px;color:#fff;font-weight:bold;letter-spacing:0.018px;text-shadow:1px 1px 0 #0a1a8a;">extClk_A-Voltage_100430.vi Frontpanel</div>
<div class="t" style="left:11.00px;top:36.00px;font-size:11px;line-height:11px;color:#000;letter-spacing:0.062px;">Datei</div>
<div class="t" style="left:11.00px;top:36.00px;font-size:11px;line-height:11px;color:transparent;text-decoration:underline;text-decoration-color:#000;">D</div>
<div class="t" style="left:48.00px;top:36.00px;font-size:11px;line-height:11px;color:#000;letter-spacing:-0.172px;">Bearbeiten</div>
<div class="t" style="left:48.00px;top:36.00px;font-size:11px;line-height:11px;color:transparent;text-decoration:underline;text-decoration-color:#000;">B</div>
<div class="t" style="left:112.50px;top:36.00px;font-size:11px;line-height:11px;color:#000;letter-spacing:-0.154px;">Ansicht</div>
<div class="t" style="left:112.50px;top:36.00px;font-size:11px;line-height:11px;color:transparent;text-decoration:underline;text-decoration-color:#000;">A</div>
<div class="t" style="left:159.00px;top:36.00px;font-size:11px;line-height:11px;color:#000;letter-spacing:-0.107px;">Projekt</div>
<div class="t" style="left:159.00px;top:36.00px;font-size:11px;line-height:11px;color:transparent;text-decoration:underline;text-decoration-color:#000;">P</div>
<div class="t" style="left:205.00px;top:36.00px;font-size:11px;line-height:11px;color:#000;letter-spacing:-0.017px;">Ausführen</div>
<div class="t" style="left:205.00px;top:36.00px;font-size:11px;line-height:11px;color:transparent;text-decoration:underline;text-decoration-color:#000;">A</div>
<div class="t" style="left:267.50px;top:36.00px;font-size:11px;line-height:11px;color:#000;letter-spacing:-0.326px;">Werkzeuge</div>
<div class="t" style="left:267.50px;top:36.00px;font-size:11px;line-height:11px;color:transparent;text-decoration:underline;text-decoration-color:#000;">W</div>
<div class="t" style="left:333.50px;top:36.00px;font-size:11px;line-height:11px;color:#000;letter-spacing:-0.114px;">Fenster</div>
<div class="t" style="left:333.50px;top:36.00px;font-size:11px;line-height:11px;color:transparent;text-decoration:underline;text-decoration-color:#000;">F</div>
<div class="t" style="left:381.00px;top:36.00px;font-size:11px;line-height:11px;color:#000;letter-spacing:-0.003px;">Hilfe</div>
<div class="t" style="left:381.00px;top:36.00px;font-size:11px;line-height:11px;color:transparent;text-decoration:underline;text-decoration-color:#000;">H</div>
<div class="t" style="left:158.30px;top:60.00px;font-size:11px;line-height:11px;color:#000;letter-spacing:-0.006px;">13pt Anwendungsschriftart</div>
<div class="t" style="left:165.00px;top:83.00px;font-size:13px;line-height:13px;color:#000;font-weight:bold;letter-spacing:-0.033px;">Read analogvoltage with external clock</div>
<div class="t" style="left:23.50px;top:104.00px;font-size:12px;line-height:12px;color:#000;font-weight:bold;letter-spacing:-0.115px;">Channel Parameters</div>
<div class="t" style="left:262.70px;top:105.00px;font-size:12px;line-height:12px;color:#000;font-weight:bold;letter-spacing:-0.125px;">Timing Parameters</div>
<div class="t" style="left:41.10px;top:142.00px;font-size:11.5px;line-height:11.5px;color:#000;letter-spacing:-0.514px;">PXI1Slot8/ai0</div>
<div class="t" style="left:34.90px;top:122.00px;font-size:11px;line-height:11px;color:#000;letter-spacing:-0.356px;">Physical Channel</div>
<div class="t" style="left:37.90px;top:169.00px;font-size:11px;line-height:11px;color:#000;letter-spacing:-0.523px;">Minimum Value</div>
<div class="t" style="left:41.70px;top:188.00px;font-size:11.5px;line-height:11.5px;color:#000;letter-spacing:-0.084px;">-3,00</div>
<div class="t" style="left:38.70px;top:213.00px;font-size:11px;line-height:11px;color:#000;letter-spacing:-0.457px;">Maximum Value</div>
<div class="t" style="left:42.40px;top:231.00px;font-size:11.5px;line-height:11.5px;color:#000;letter-spacing:-0.173px;">3,00</div>
<div class="t" style="left:268.70px;top:120.00px;font-size:11px;line-height:11px;color:#000;letter-spacing:-0.452px;">Clock Source</div>
<div class="t" style="left:279.10px;top:146.00px;font-size:11.5px;line-height:11.5px;color:#000;letter-spacing:-0.442px;">/PXI1Slot8/PFI0</div>
<div class="t" style="left:274.00px;top:170.00px;font-size:11px;line-height:11px;color:#000;letter-spacing:-0.321px;">Samples per Channel</div>
<div class="t" style="left:277.70px;top:189.00px;font-size:11.5px;line-height:11.5px;color:#000;letter-spacing:-0.497px;">32768</div>
<div class="t" style="left:272.20px;top:213.00px;font-size:11px;line-height:11px;color:#000;letter-spacing:-0.308px;">Sample Rate (Hz)</div>
<div class="t" style="left:275.80px;top:231.00px;font-size:11.5px;line-height:11.5px;color:#000;letter-spacing:-0.321px;">12800,00</div>
<div class="t" style="left:271.70px;top:254.00px;font-size:11px;line-height:11px;color:#000;letter-spacing:-0.433px;">gemessene Sample</div>
<div class="t" style="left:276.50px;top:275.00px;font-size:11.5px;line-height:11.5px;color:#000;letter-spacing:-0.497px;">32768</div>
<div class="t" style="left:373.30px;top:254.00px;font-size:11px;line-height:11px;color:#000;letter-spacing:-0.105px;">gemessener Takt</div>
<div class="t" style="left:378.70px;top:275.00px;font-size:11.5px;line-height:11.5px;color:#000;letter-spacing:-0.497px;">12800</div>
<div class="t" style="left:489.60px;top:97.00px;font-size:12px;line-height:12px;color:#000;font-weight:bold;letter-spacing:0.093px;">Measurement</div>
<div class="t" style="left:524.30px;top:119.00px;font-size:11px;line-height:11px;color:#000;">3,5</div>
<div class="t" style="left:524.30px;top:142.00px;font-size:11px;line-height:11px;color:#000;">2,0</div>
<div class="t" style="left:524.30px;top:174.00px;font-size:11px;line-height:11px;color:#000;">0,0</div>
<div class="t" style="left:520.63px;top:205.00px;font-size:11px;line-height:11px;color:#000;">-2,0</div>
<div class="t" style="left:520.63px;top:229.00px;font-size:11px;line-height:11px;color:#000;">-3,5</div>
<div class="t" style="left:545.44px;top:244.00px;font-size:11px;line-height:11px;color:#000;">0</div>
<div class="t" style="left:703.80px;top:244.00px;font-size:11px;line-height:11px;color:#000;letter-spacing:-0.086px;">2,559922</div>
<div class="t" style="left:619.70px;top:259.00px;font-size:11px;line-height:11px;color:#000;letter-spacing:-0.328px;">Time (s)</div>
<div class="t" style="left:504.69px;top:186.40px;font-size:11px;line-height:11px;color:#000;letter-spacing:-0.090px;transform:rotate(-90deg);transform-origin:0 0;">Volt</div>
<div class="t" style="left:647.50px;top:91.00px;font-size:11.5px;line-height:11.5px;color:#000;letter-spacing:-0.407px;">PXI1Slot8/ai0</div>
<div class="t" style="left:687.70px;top:288.00px;font-size:11.5px;line-height:11.5px;color:#000;letter-spacing:-0.520px;">Plot 0</div>
<div class="t" style="left:21.40px;top:292.00px;font-size:11px;line-height:11px;color:#000;letter-spacing:-0.260px;">Spektrum</div>
<div class="t" style="left:59.54px;top:312.00px;font-size:11px;line-height:11px;color:#000;">0,0035</div>
<div class="t" style="left:65.67px;top:336.00px;font-size:11px;line-height:11px;color:#000;">0,003</div>
<div class="t" style="left:59.54px;top:359.00px;font-size:11px;line-height:11px;color:#000;">0,0025</div>
<div class="t" style="left:65.67px;top:383.00px;font-size:11px;line-height:11px;color:#000;">0,002</div>
<div class="t" style="left:59.54px;top:407.00px;font-size:11px;line-height:11px;color:#000;">0,0015</div>
<div class="t" style="left:65.67px;top:430.00px;font-size:11px;line-height:11px;color:#000;">0,001</div>
<div class="t" style="left:59.54px;top:454.00px;font-size:11px;line-height:11px;color:#000;">0,0005</div>
<div class="t" style="left:87.08px;top:478.00px;font-size:11px;line-height:11px;color:#000;">0</div>
<div class="t" style="left:100.25px;top:490.00px;font-size:11px;line-height:11px;color:#000;">0</div>
<div class="t" style="left:129.60px;top:490.00px;font-size:11px;line-height:11px;color:#000;letter-spacing:-0.625px;">10</div>
<div class="t" style="left:161.70px;top:490.00px;font-size:11px;line-height:11px;color:#000;letter-spacing:-0.625px;">20</div>
<div class="t" style="left:193.80px;top:490.00px;font-size:11px;line-height:11px;color:#000;letter-spacing:-0.625px;">30</div>
<div class="t" style="left:225.90px;top:490.00px;font-size:11px;line-height:11px;color:#000;letter-spacing:-0.625px;">40</div>
<div class="t" style="left:258.00px;top:490.00px;font-size:11px;line-height:11px;color:#000;letter-spacing:-0.625px;">50</div>
<div class="t" style="left:290.10px;top:490.00px;font-size:11px;line-height:11px;color:#000;letter-spacing:-0.625px;">60</div>
<div class="t" style="left:322.20px;top:490.00px;font-size:11px;line-height:11px;color:#000;letter-spacing:-0.625px;">70</div>
<div class="t" style="left:354.30px;top:490.00px;font-size:11px;line-height:11px;color:#000;letter-spacing:-0.625px;">80</div>
<div class="t" style="left:386.40px;top:490.00px;font-size:11px;line-height:11px;color:#000;letter-spacing:-0.625px;">90</div>
<div class="t" style="left:415.75px;top:490.00px;font-size:11px;line-height:11px;color:#000;letter-spacing:-0.620px;">100</div>
<div class="t" style="left:447.85px;top:490.00px;font-size:11px;line-height:11px;color:#000;letter-spacing:-0.349px;">110</div>
<div class="t" style="left:479.95px;top:490.00px;font-size:11px;line-height:11px;color:#000;letter-spacing:-0.620px;">120</div>
<div class="t" style="left:512.05px;top:490.00px;font-size:11px;line-height:11px;color:#000;letter-spacing:-0.620px;">130</div>
<div class="t" style="left:544.15px;top:490.00px;font-size:11px;line-height:11px;color:#000;letter-spacing:-0.620px;">140</div>
<div class="t" style="left:576.25px;top:490.00px;font-size:11px;line-height:11px;color:#000;letter-spacing:-0.620px;">150</div>
<div class="t" style="left:608.35px;top:490.00px;font-size:11px;line-height:11px;color:#000;letter-spacing:-0.620px;">160</div>
<div class="t" style="left:640.45px;top:490.00px;font-size:11px;line-height:11px;color:#000;letter-spacing:-0.620px;">170</div>
<div class="t" style="left:672.55px;top:490.00px;font-size:11px;line-height:11px;color:#000;letter-spacing:-0.620px;">180</div>
<div class="t" style="left:704.65px;top:490.00px;font-size:11px;line-height:11px;color:#000;letter-spacing:-0.620px;">190</div>
<div class="t" style="left:736.75px;top:490.00px;font-size:11px;line-height:11px;color:#000;letter-spacing:-0.620px;">200</div>
<div class="t" style="left:407.80px;top:506.00px;font-size:11px;line-height:11px;color:#000;letter-spacing:-0.910px;">Hz ???</div>
<div class="t" style="left:45.29px;top:422.20px;font-size:11px;line-height:11px;color:#000;letter-spacing:-0.369px;transform:rotate(-90deg);transform-origin:0 0;">Amplitude</div>
</body></html>
